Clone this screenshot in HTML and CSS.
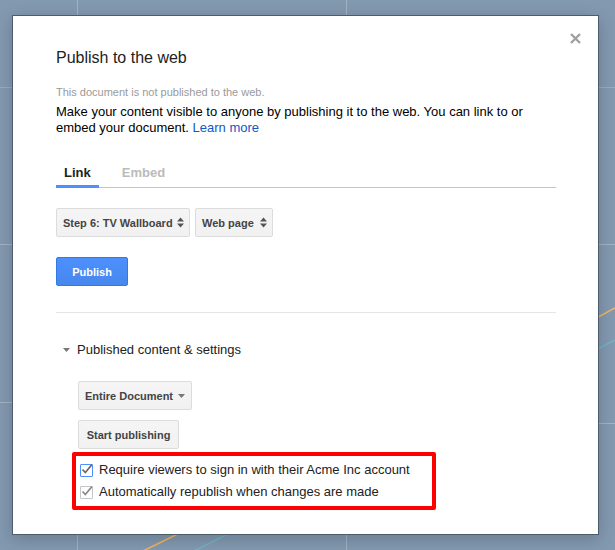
FILE: index.html
```html
<!DOCTYPE html>
<html>
<head>
<meta charset="utf-8">
<link rel="stylesheet" href="styles.css">
</head>
<body>
<svg class="backdrop" width="615" height="550" viewBox="0 0 615 550">
  <line x1="77.5" y1="0" x2="77.5" y2="550" stroke="#a3b4c6" stroke-width="1"/>
  <line x1="346.5" y1="0" x2="346.5" y2="550" stroke="#a3b4c6" stroke-width="1"/>
  <line x1="0" y1="87.5" x2="615" y2="87.5" stroke="#e4937d" stroke-width="1"/>
  <line x1="0" y1="244.5" x2="615" y2="244.5" stroke="#a3b4c6" stroke-width="1"/>
  <line x1="0" y1="402.5" x2="40" y2="402.5" stroke="#a3b4c6" stroke-width="1"/>
  <line x1="580" y1="423.5" x2="615" y2="423.5" stroke="#a3b4c6" stroke-width="1"/>
  <line x1="580" y1="327" x2="615" y2="308" stroke="#f2b560" stroke-width="1.5"/>
  <line x1="580" y1="358" x2="615" y2="340" stroke="#72b4c4" stroke-width="1.5"/>
  <line x1="143" y1="551" x2="190" y2="528" stroke="#f2b560" stroke-width="1.5"/>
  <line x1="194" y1="551" x2="240" y2="528" stroke="#72b4c4" stroke-width="1.5"/>
</svg>

<div class="dialog">
  <svg class="close" width="11" height="11" viewBox="0 0 11 11">
    <path d="M1 1 L10 10 M10 1 L1 10" stroke="#a0a0a0" stroke-width="2.4" fill="none"/>
  </svg>

  <h1 class="title">Publish to the web</h1>
  <p class="status">This document is not published to the web.</p>
  <p class="desc">Make your content visible to anyone by publishing it to the web. You can link to or embed your document. <a class="link" href="#">Learn more</a></p>

  <div class="tabs">
    <div class="tab active">Link</div>
    <div class="tab">Embed</div>
  </div>

  <div class="selects">
    <div class="select select-step">
      <span class="select-label">Step 6: TV Wallboard</span>
      <svg class="updown" width="7" height="11" viewBox="0 0 7 11"><path d="M0 4.5 L3.5 0.5 L7 4.5 Z M0 6.5 L3.5 10.5 L7 6.5 Z" fill="#555"/></svg>
    </div>
    <div class="select select-type">
      <span class="select-label">Web page</span>
      <svg class="updown" width="7" height="11" viewBox="0 0 7 11"><path d="M0 4.5 L3.5 0.5 L7 4.5 Z M0 6.5 L3.5 10.5 L7 6.5 Z" fill="#555"/></svg>
    </div>
  </div>

  <button class="btn-primary">Publish</button>

  <div class="separator"></div>

  <div class="section-head">
    <svg class="caret" width="7" height="4" viewBox="0 0 7 4"><path d="M0 0 L7 0 L3.5 4 Z" fill="#777"/></svg>
    <span>Published content &amp; settings</span>
  </div>

  <div class="section-body">
    <div class="select select-doc">
      <span class="select-label">Entire Document</span>
      <svg class="down" width="7" height="4" viewBox="0 0 7 4"><path d="M0 0 L7 0 L3.5 4 Z" fill="#777"/></svg>
    </div>
    <button class="btn-default">Start publishing</button>
  </div>

  <div class="highlight">
    <label class="check-row">
      <span class="checkbox checkbox-focus">
        <svg width="13" height="13" viewBox="0 0 13 13"><path d="M2.5 6.5 L5.3 9.5 L12 1.5" stroke="#6a6a6a" stroke-width="1.8" fill="none"/></svg>
      </span>
      <span>Require viewers to sign in with their Acme Inc account</span>
    </label>
    <label class="check-row">
      <span class="checkbox">
        <svg width="13" height="13" viewBox="0 0 13 13"><path d="M2.5 6.5 L5.3 9.5 L12 1.5" stroke="#8a8a8a" stroke-width="1.8" fill="none"/></svg>
      </span>
      <span>Automatically republish when changes are made</span>
    </label>
  </div>
</div>
</body>
</html>
```

FILE: styles.css
```css
html, body {
  margin: 0;
  padding: 0;
}
body {
  width: 615px;
  height: 550px;
  overflow: hidden;
  background: #8399b0;
  font-family: "Liberation Sans", Arial, sans-serif;
  position: relative;
}
.backdrop {
  position: absolute;
  left: 0;
  top: 0;
}
.dialog {
  position: relative;
  margin: 15px 0 0 12px;
  width: 500px;
  height: 454px;
  padding: 33px 42px 31px 43px;
  background: #fff;
  border: 1px solid #4c5c6c;
  box-shadow: 0 4px 16px rgba(0, 0, 0, 0.2);
}
.close {
  position: absolute;
  right: 17px;
  top: 17px;
}
.title {
  margin: 0;
  font-size: 16px;
  line-height: 18px;
  font-weight: normal;
  color: #222;
}
.status {
  margin: 19px 0 0;
  font-size: 11px;
  line-height: 13px;
  color: #9a9a9a;
}
.desc {
  margin: 5px 0 0;
  font-size: 13px;
  line-height: 16px;
  color: #000;
}
.link {
  color: #1155cc;
  text-decoration: none;
}
.tabs {
  margin-top: 29px;
  display: flex;
  gap: 15px;
  border-bottom: 1px solid #c4c4c4;
}
.tab {
  padding: 0 8px 4px;
  font-size: 13px;
  line-height: 16px;
  font-weight: bold;
  color: #bbb;
  border-bottom: 3px solid transparent;
  margin-bottom: -1px;
}
.tab.active {
  color: #222;
  border-bottom-color: #4d90fe;
}
.selects {
  margin-top: 20px;
  display: flex;
  gap: 5px;
}
.select {
  display: flex;
  align-items: center;
  justify-content: space-between;
  box-sizing: border-box;
  height: 29px;
  padding: 0 5px 0 6px;
  border: 1px solid #dcdcdc;
  border-radius: 2px;
  background: linear-gradient(#f5f5f5, #f1f1f1);
  font-size: 11px;
  font-weight: bold;
  color: #444;
  white-space: nowrap;
}
.select-label {
  white-space: nowrap;
}
.select-step { width: 134px; }
.select-type { width: 78px; }
.select-doc {
  width: 114px;
  padding-right: 6px;
}
.updown { flex: none; }
.down { flex: none; }
.btn-primary {
  display: block;
  margin-top: 20px;
  width: 72px;
  height: 29px;
  padding: 0;
  border: 1px solid #3079ed;
  border-radius: 2px;
  background: linear-gradient(#4d90fe, #4787ed);
  color: #fff;
  font-family: inherit;
  font-size: 11px;
  font-weight: bold;
}
.separator {
  margin-top: 26px;
  height: 1px;
  background: #e5e5e5;
}
.section-head {
  margin-top: 29px;
  display: flex;
  align-items: center;
  font-size: 13px;
  line-height: 16px;
  color: #222;
}
.caret {
  margin: 0 7px 0 7px;
}
.section-body {
  margin: 23px 0 0 22px;
  display: flex;
  flex-direction: column;
  align-items: flex-start;
  gap: 10px;
}
.btn-default {
  display: block;
  width: 101px;
  height: 29px;
  padding: 0;
  border: 1px solid #dcdcdc;
  border-radius: 2px;
  background: linear-gradient(#f5f5f5, #f1f1f1);
  color: #444;
  font-family: inherit;
  font-size: 11px;
  font-weight: bold;
}
.highlight {
  margin: 3px 0 0 16px;
  width: 352px;
  padding: 6px 0 6px 4px;
  border: 4px solid #ff0000;
  border-radius: 2px;
  display: flex;
  flex-direction: column;
  gap: 6px;
}
.check-row {
  display: flex;
  align-items: center;
  gap: 6px;
  font-size: 13px;
  line-height: 16px;
  color: #222;
}
.checkbox {
  position: relative;
  box-sizing: border-box;
  width: 13px;
  height: 13px;
  border: 1px solid #c6c6c6;
  border-radius: 1px;
  background: #fff;
  flex: none;
}
.checkbox-focus {
  border-color: #4d90fe;
}
.checkbox svg {
  position: absolute;
  left: -1px;
  top: -2px;
}
```
